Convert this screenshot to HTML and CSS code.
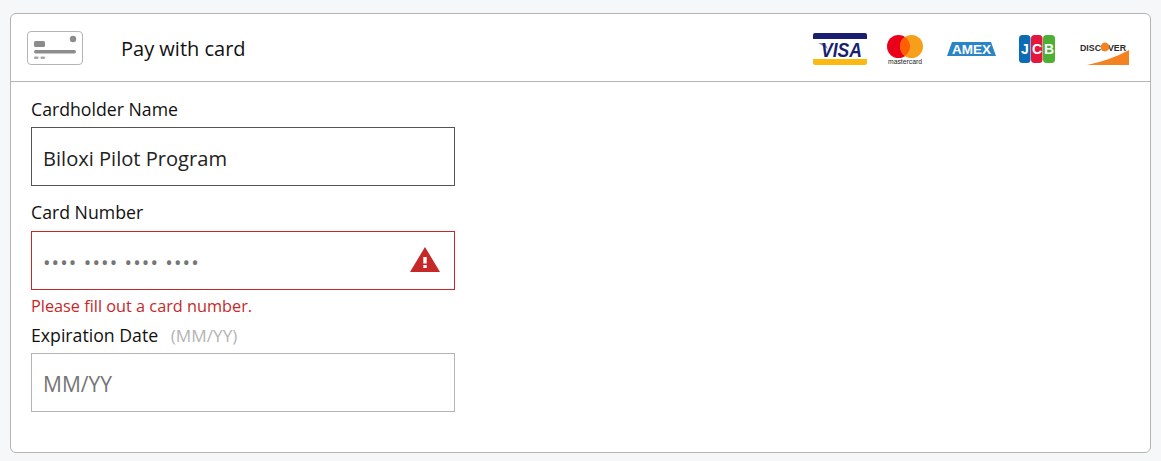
FILE: index.html
```html
<!DOCTYPE html>
<html lang="en">
<head>
    <meta charset="UTF-8">
    <meta name="viewport" content="width=device-width, initial-scale=1.0">
    <title>Pay with card</title>
    <link rel="stylesheet" href="styles.css">
</head>
<body>
    <div class="card">
        <div class="card-header">
            <div class="header-left">
                <svg class="card-icon" width="56" height="34" viewBox="0 0 56 34">
                    <rect x="0.5" y="0.5" width="55" height="33" rx="3.5" fill="#fff" stroke="#b4b4b4"/>
                    <rect x="7" y="10" width="11" height="6" rx="1.5" fill="#8c8c8c"/>
                    <circle cx="46" cy="8" r="3.2" fill="#8c8c8c"/>
                    <rect x="7" y="19" width="42" height="3.4" rx="1.7" fill="#8c8c8c"/>
                    <rect x="7" y="25.5" width="4.5" height="2.5" rx="1" fill="#a8a8a8"/>
                    <rect x="13.5" y="25.5" width="4.5" height="2.5" rx="1" fill="#a8a8a8"/>
                </svg>
                <span class="header-title">Pay with card</span>
            </div>
            <div class="logos">
                <svg class="logo-visa" width="54" height="32" viewBox="0 0 54 32">
                    <path d="M0 6V2a2 2 0 0 1 2-2h50a2 2 0 0 1 2 2v4z" fill="#1a1f71"/>
                    <path d="M0 26v4a2 2 0 0 0 2 2h50a2 2 0 0 0 2-2v-4z" fill="#fdb913"/>
                    <path d="M5 10h7l3 6z" fill="#8d90b8"/>
                    <text class="visa-text" x="8" y="23.5" textLength="41" lengthAdjust="spacingAndGlyphs">VISA</text>
                </svg>
                <svg class="logo-mc" width="36" height="30" viewBox="0 0 36 30">
                    <circle cx="11.5" cy="11.5" r="11.5" fill="#eb001b"/>
                    <circle cx="24.5" cy="11.5" r="11.5" fill="#f79e1b"/>
                    <path d="M18 2a11.5 11.5 0 0 1 0 19a11.5 11.5 0 0 1 0-19z" fill="#ff5f00"/>
                    <text class="mc-text" x="1" y="28.5" textLength="34" lengthAdjust="spacingAndGlyphs">mastercard</text>
                </svg>
                <svg class="logo-amex" width="49" height="14" viewBox="0 0 49 14">
                    <path d="M5 0h39l5 14H0z" fill="#2b84c6"/>
                    <text class="amex-text" x="5" y="12" textLength="39" lengthAdjust="spacingAndGlyphs">AMEX</text>
                </svg>
                <svg class="logo-jcb" width="36" height="28" viewBox="0 0 36 28">
                    <rect x="0" y="0" width="11.5" height="28" rx="3.5" fill="#0b6bb5"/>
                    <rect x="12" y="0" width="11.5" height="28" rx="3.5" fill="#e3173e"/>
                    <rect x="24" y="0" width="12" height="28" rx="3.5" fill="#4bb034"/>
                    <text class="jcb-text" x="6" y="19" text-anchor="middle">J</text>
                    <text class="jcb-text" x="18" y="19" text-anchor="middle">C</text>
                    <text class="jcb-text" x="30" y="19" text-anchor="middle">B</text>
                </svg>
                <svg class="logo-discover" width="50" height="25" viewBox="0 0 50 25">
                    <path d="M8 25Q32 20 50 10v15z" fill="#f58220"/>
                    <text class="discover-text" x="1" y="10.5" textLength="46" lengthAdjust="spacingAndGlyphs">DISCOVER</text>
                    <circle cx="26" cy="7" r="4.4" fill="#f58220"/>
                </svg>
            </div>
        </div>
        <form class="card-form">
            <div class="field">
                <label class="field-label">Cardholder Name</label>
                <div class="input-box filled">Biloxi Pilot Program</div>
            </div>
            <div class="field">
                <label class="field-label number-label">Card Number</label>
                <div class="input-box error">
                    <span class="dots">•••• •••• •••• ••••</span>
                    <svg class="warn-icon" width="30" height="25" viewBox="0 0 30 25">
                        <path d="M15 0L30 25H0z" fill="#c62828"/>
                        <rect x="13.3" y="10" width="3.4" height="6.5" fill="#fff"/>
                        <rect x="13.3" y="18" width="3.4" height="3" fill="#fff"/>
                    </svg>
                </div>
                <p class="error-text">Please fill out a card number.</p>
            </div>
            <div class="field">
                <label class="field-label">Expiration Date <span class="hint">(MM/YY)</span></label>
                <div class="input-box placeholder">MM/YY</div>
            </div>
        </form>
    </div>
</body>
</html>
```

FILE: styles.css
```css
* {
    margin: 0;
    padding: 0;
    box-sizing: border-box;
}

body {
    font-family: "Open Sans", "Noto Sans", sans-serif;
    background-color: #f6f7f9;
    padding: 13px 10px 8px;
}

.card {
    background-color: white;
    border: 1px solid #b4b4b4;
    border-radius: 6px;
}

.card-header {
    height: 68px;
    padding: 0 21px 0 16px;
    border-bottom: 1px solid #b4b4b4;
    display: flex;
    justify-content: space-between;
    align-items: center;
}

.header-left {
    display: flex;
    align-items: center;
    gap: 38px;
}

.card-icon {
    display: block;
}

.header-title {
    font-size: 20px;
    color: #111;
    padding-top: 2px;
}

.logos {
    display: flex;
    align-items: center;
    gap: 24px;
    padding-top: 3px;
}

.logos svg {
    display: block;
}

.logo-visa {
    margin-right: -4px;
}

.logo-mc {
    margin-top: 1px;
}

.logo-jcb {
    margin-left: -1px;
}

.logo-discover {
    margin-top: 7px;
}

.visa-text {
    font-family: "Liberation Sans", sans-serif;
    font-size: 20px;
    font-weight: bold;
    font-style: italic;
    fill: #1a1f71;
}

.mc-text {
    font-family: "Liberation Sans", sans-serif;
    font-size: 6.5px;
    fill: #222;
}

.amex-text {
    font-family: "Liberation Sans", sans-serif;
    font-size: 13px;
    font-weight: bold;
    fill: #fff;
}

.jcb-text {
    font-family: "Liberation Sans", sans-serif;
    font-size: 14px;
    font-weight: bold;
    fill: #fff;
}

.discover-text {
    font-family: "Liberation Sans", sans-serif;
    font-size: 8.8px;
    font-weight: bold;
    fill: #2b2b2b;
}

.card-form {
    padding: 15px 20px 40px;
    display: flex;
    flex-direction: column;
}

.field {
    width: 424px;
    margin-bottom: 14px;
}

.field:last-child {
    margin-bottom: 0;
}

.field-label {
    display: block;
    font-size: 17.7px;
    line-height: 24px;
    margin-bottom: 6px;
    color: #111;
}

.number-label {
    margin-bottom: 7px;
}

.hint {
    font-size: 17.2px;
    line-height: 1;
    color: #b4b4b4;
    margin-left: 8px;
}

.input-box {
    height: 59px;
    padding: 3px 11px 0;
    border: 1px solid #b4b4b4;
    font-size: 20.1px;
    display: flex;
    align-items: center;
    justify-content: space-between;
}

.filled {
    border-color: #555;
    color: #222;
}

.placeholder {
    color: #757575;
    font-size: 21px;
}

.error {
    border-color: #c62828;
}

.dots {
    color: #757575;
    font-size: 20px;
    letter-spacing: 1.1px;
}

.warn-icon {
    display: block;
    margin-right: 3px;
    margin-top: -6px;
}

.error-text {
    font-size: 16.3px;
    line-height: 24px;
    margin-top: 4px;
    margin-bottom: -9px;
    color: #c62828;
}
```
